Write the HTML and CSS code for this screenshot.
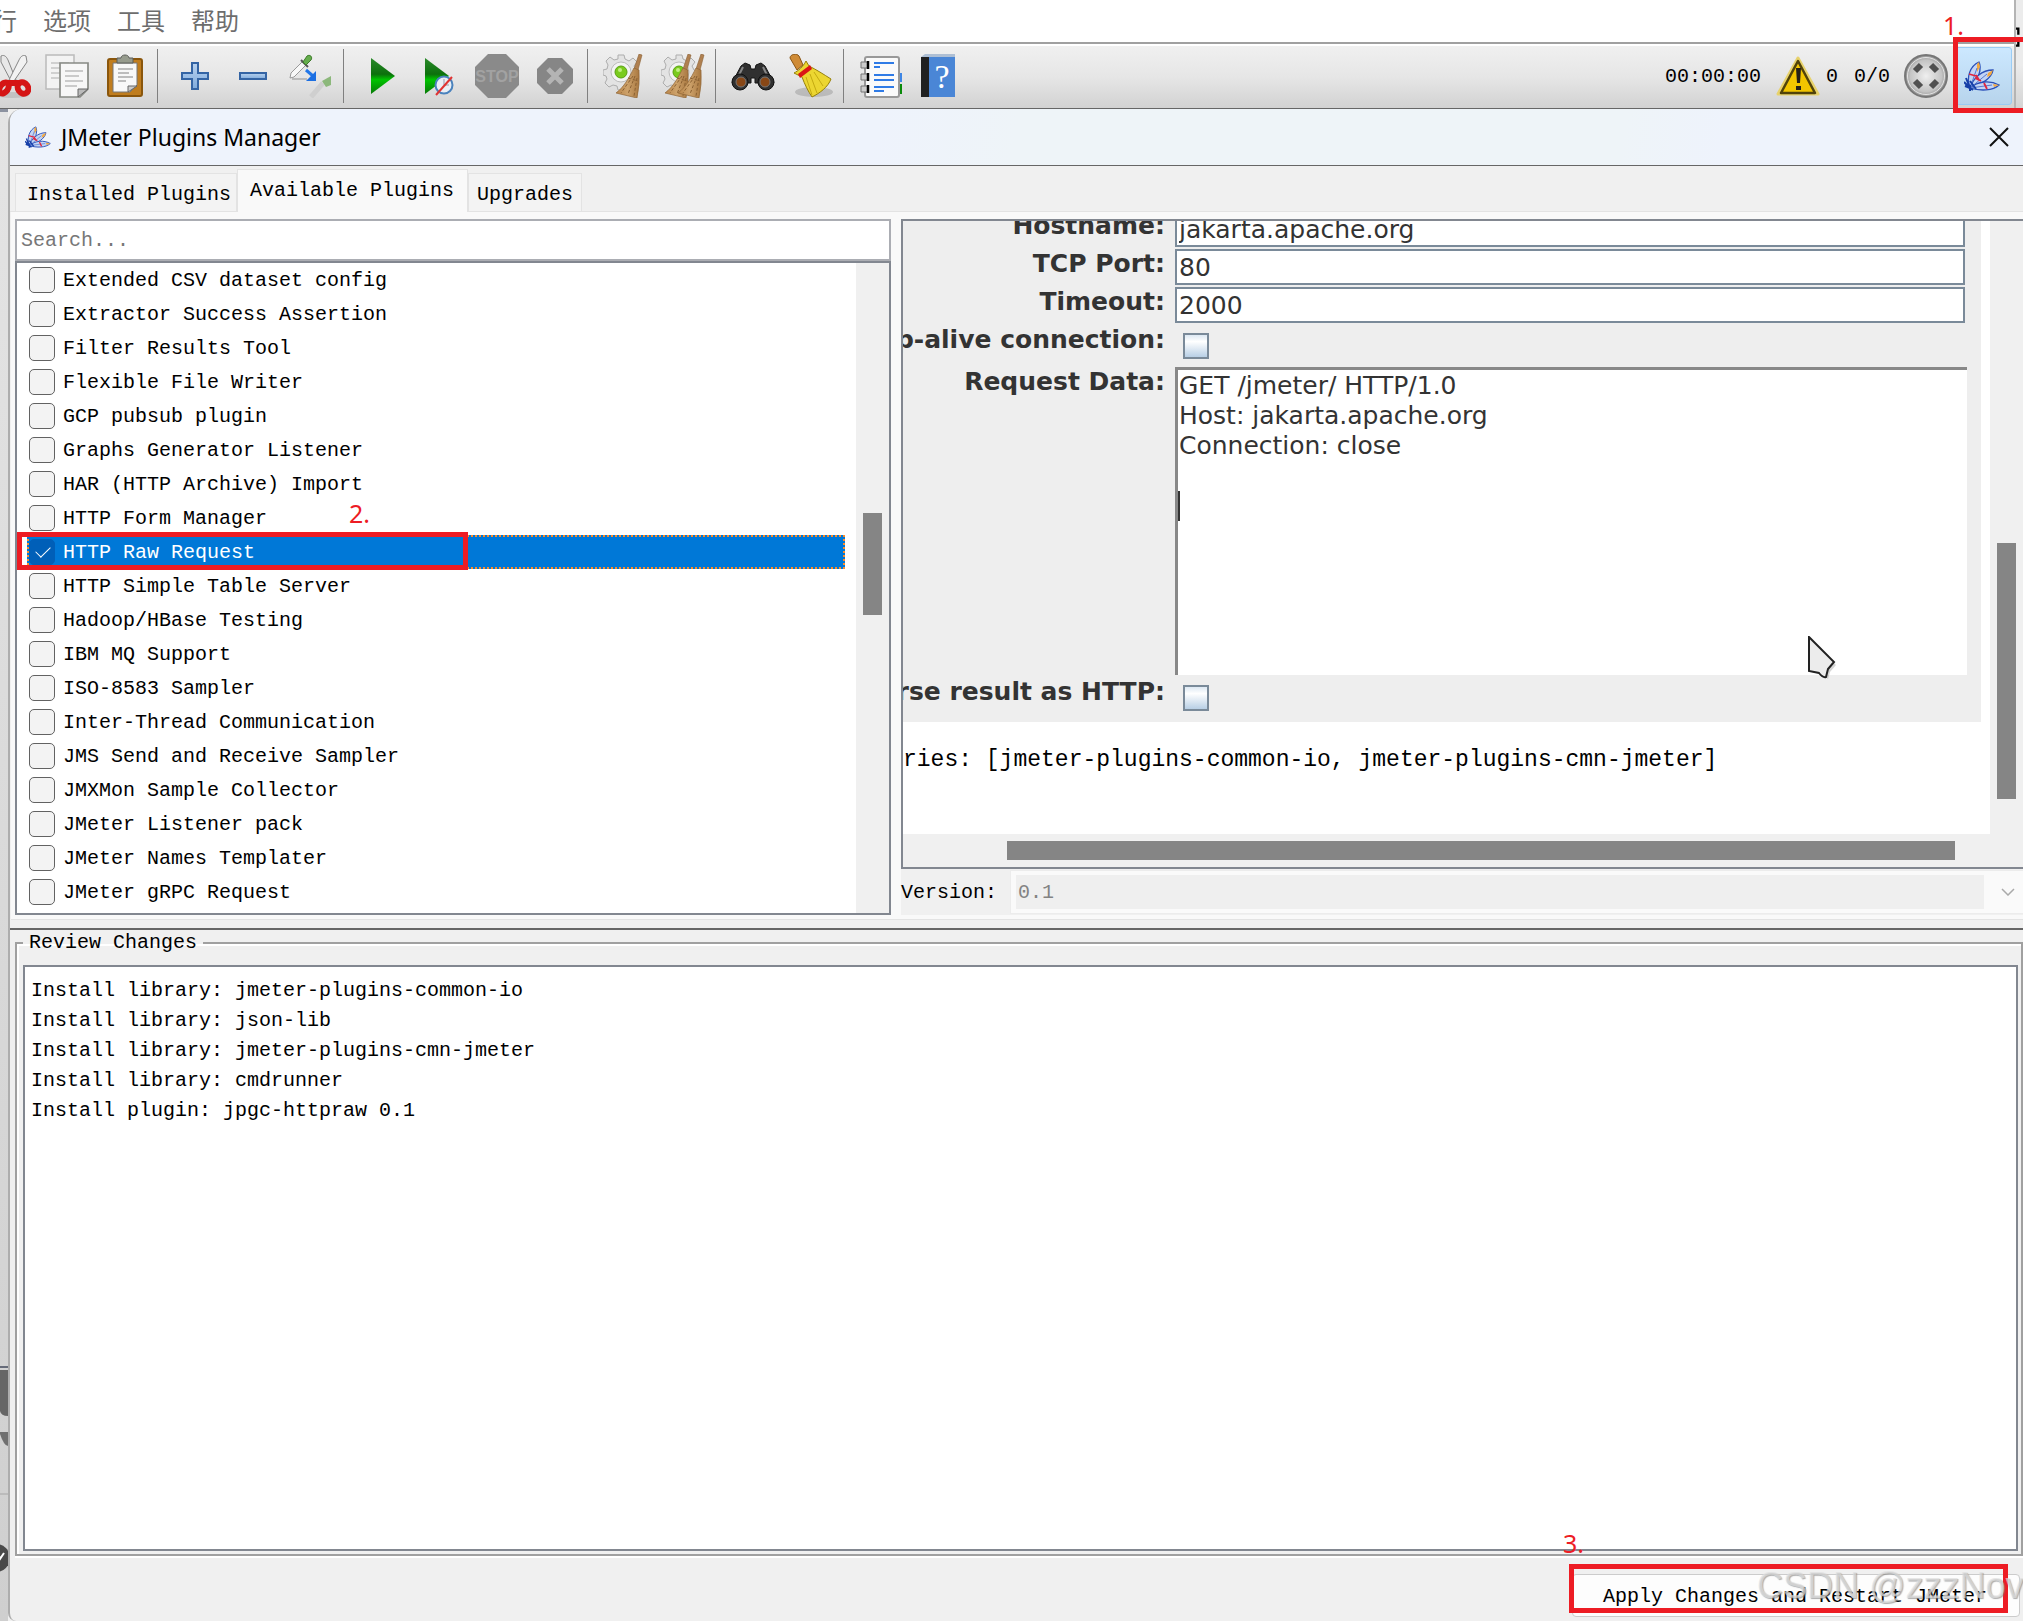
FILE: index.html
```html
<!DOCTYPE html>
<html lang="zh-CN">

<head>
    <meta charset="UTF-8">
    <meta name="viewport" content="width=device-width, initial-scale=1.0">
    <title>JMeter Plugins Manager</title>
    <link rel="stylesheet" href="styles.css">
</head>

<body>
    <svg class="defs" aria-hidden="true">
        <defs>
            <linearGradient id="green" x1="0" y1="0" x2="0" y2="1">
                <stop offset="0" stop-color="#2b8a2b" />
                <stop offset=".45" stop-color="#0c700c" />
                <stop offset=".6" stop-color="#00c400" />
                <stop offset="1" stop-color="#087808" />
            </linearGradient>
            <linearGradient id="blue" x1="0" y1="0" x2="0" y2="1">
                <stop offset="0" stop-color="#b9d2ee" />
                <stop offset="1" stop-color="#7fabdd" />
            </linearGradient>
            <linearGradient id="straw" x1="0" y1="0" x2="1" y2="0">
                <stop offset="0" stop-color="#b98549" />
                <stop offset=".5" stop-color="#cda26b" />
                <stop offset="1" stop-color="#a97840" />
            </linearGradient>
            <radialGradient id="ball">
                <stop offset="0" stop-color="#efefef" />
                <stop offset=".75" stop-color="#c4c4c4" />
                <stop offset="1" stop-color="#8e8e8e" />
            </radialGradient>
        </defs>
        <symbol id="feather" viewBox="0 0 36 32">
            <g fill="#c3d4f4" stroke="#2b50b8" stroke-width="1.3">
                <path d="M6 28C2 17 6 6 15 2c3 6 0 18-9 26z" />
                <path d="M6 28C9 18 18 10 29 10c-1 8-12 15-23 18z" />
                <path d="M6 28c8-7 20-8 29-3-6 6-19 6-29 3z" />
            </g>
            <path d="M13 4l2-2 1 5-3 5zM24 13l5-3-2 5-4 2zM29 24l6 1-5 2z" fill="#f5a83c" />
            <path d="M6 28L13 8M6 28l17-14M6 28l22-3" stroke="#5779cf" fill="none" />
            <path d="M5 14l7 2M11 18l6 3M20 23l3 6M12 15l3 5" stroke="#e0263f" stroke-width="1.8" fill="none" />
            <path d="M0 22l6 6M2 18l4 10M1 26l5 2M9 30l-3-2M6 31v-6M12 29l-6-8" stroke="#163fa8" stroke-width="2" />
        </symbol>
        <symbol id="gear" viewBox="0 0 36 36">
            <path d="M15 1h6l1 4 4 2 4-3 4 4-3 4 2 4 3 1v5l-4 1-2 4 3 4-4 4-4-3-4 1-1 3h-5l-1-4-4-1-4 2-4-4 2-4-1-3-3-1v-5l4-1 1-4-2-4 4-4 4 3 4-1z" fill="#e3e3e3" stroke="#adadad" />
            <circle cx="18" cy="18" r="10" fill="#f3f3f3" stroke="#bdbdbd" />
            <circle cx="18" cy="18" r="6" fill="#7acb1d" stroke="#58a010" />
            <circle cx="17" cy="16" r="2" fill="#c0f080" />
        </symbol>
        <symbol id="besom" viewBox="0 0 28 44">
            <path d="M24 0l3 1-4 15-4-1z" fill="#b08050" stroke="#8b6337" stroke-width=".6" />
            <path d="M19 14l5 2q1 14-2 28l-21-5c8-6 13-15 18-25z" fill="url(#straw)" stroke="#8f6536" stroke-width=".7" />
            <path d="M13 24l10 3M18 22L6 39M20 22l-7 18M22 24l-3 18" stroke="#8a6032" stroke-dasharray="3 2" fill="none" />
        </symbol>
    </svg>

    <div class="app">
        <nav class="menubar">
            <a href="#">行</a>
            <a href="#">选项</a>
            <a href="#">工具</a>
            <a href="#">帮助</a>
        </nav>
        <div class="toolbar">
            <button class="tool" aria-label="Cut">
                <svg viewBox="0 0 44 44">
                    <ellipse cx="25" cy="41" rx="17" ry="3" fill="#aaa" opacity=".5" />
                    <path d="M14 2c4-2 6 2 7 4l8 20-5 1L14 8z" fill="#e8e8e8" stroke="#858585" />
                    <path d="M39 2c-4-2-6 2-7 4l-10 20 5 1L40 8z" fill="#f2f2f2" stroke="#858585" />
                    <g fill="none" stroke="#d51515" stroke-width="6">
                        <ellipse cx="17" cy="34" rx="4" ry="6" transform="rotate(35 17 34)" />
                        <ellipse cx="36" cy="34" rx="5" ry="6" transform="rotate(-35 36 34)" />
                    </g>
                    <path d="M20 26h13l-3 6h-6z" fill="#d51515" />
                </svg>
            </button>
            <button class="tool" aria-label="Copy">
                <svg viewBox="0 0 44 44">
                    <path d="M1 1h28v34H1z" fill="#f3f3f3" stroke="#bbb" stroke-width="1.500" />
                    <path d="M6 9h18M6 14h9M6 19h9M6 24h8" stroke="#d0d0d0" stroke-width="2" />
                    <path d="M15 9h28v26l-8 8H15z" fill="#f7f7f7" stroke="#888a85" stroke-width="1.700" />
                    <path d="M20 17h18M20 22h14M20 27h18M20 32h12" stroke="#bcbcbc" stroke-width="1.700" />
                    <path d="M33 43v-8h10z" fill="#bbb" stroke="#666" />
                </svg>
            </button>
            <button class="tool" aria-label="Paste">
                <svg viewBox="0 0 44 44">
                    <rect x="5" y="5" width="34" height="37" rx="2" fill="#c07d1e" stroke="#8a560c" stroke-width="2" />
                    <path d="M10 9h24v22l-7 7H10z" fill="#f8f8f8" stroke="#777" />
                    <path d="M14 7V4h4c0-4 8-4 8 0h4v5H14z" fill="#969b8d" stroke="#5b5d58" />
                    <path d="M15 15h15M15 19h11M15 23h15M15 27h8" stroke="#a9a9a9" stroke-width="1.600" />
                    <path d="M25 38v-6h9z" fill="#ccc" stroke="#666" />
                </svg>
            </button>
            <span class="sep"></span>
            <button class="tool" aria-label="Expand all">
                <svg viewBox="0 0 44 44">
                    <path d="M19 9h6v10h10v6H25v10h-6V25H9v-6h10z" fill="url(#blue)" stroke="#3464a4" stroke-width="2" />
                </svg>
            </button>
            <button class="tool" aria-label="Collapse all">
                <svg viewBox="0 0 44 44">
                    <path d="M9 19h26v6H9z" fill="url(#blue)" stroke="#3464a4" stroke-width="2" />
                </svg>
            </button>
            <button class="tool" aria-label="Toggle">
                <svg viewBox="0 0 44 44">
                    <path d="M13 8l4 3L5 23l-4 1 1-5z" fill="#f8f8f8" stroke="#999" />
                    <path d="M12 6l7 7" stroke="#555" stroke-width="2" />
                    <path d="M14 8l4-6c3-2 6 1 4 4l-5 5z" fill="#65ad4c" stroke="#3d7b2b" />
                    <path d="M3 25h15" stroke="#bbb" stroke-width="2" />
                    <path d="M17 16l7 6" stroke="#2277e8" stroke-width="3" />
                    <path d="M27 17v10H17z" fill="#1c6fe2" />
                    <path d="M34 29L22 43" stroke="#cfcfcf" stroke-width="5" />
                    <path d="M33 27l9-5v9l-5 2z" fill="#8cb87b" />
                </svg>
            </button>
            <span class="sep"></span>
            <button class="tool" aria-label="Start">
                <svg viewBox="0 0 44 44">
                    <path d="M12 4l24 18-24 18z" fill="url(#green)" />
                </svg>
            </button>
            <button class="tool" aria-label="Start no pauses">
                <svg viewBox="0 0 44 44">
                    <path d="M8 4l24 18L8 40z" fill="url(#green)" />
                    <circle cx="27" cy="31" r="8.500" fill="#e9eef5" stroke="#4a82bd" stroke-width="2" />
                    <path d="M27 25v6h5" stroke="#99a" fill="none" />
                    <path d="M19 41l16-18" stroke="#e03333" stroke-width="2" />
                </svg>
            </button>
            <button class="tool" aria-label="Stop" disabled>
                <svg viewBox="0 0 44 44">
                    <path d="M13 0h18l13 13v18L31 44H13L0 31V13z" fill="#8a8a8a" />
                    <text x="22" y="28" class="stop-text">STOP</text>
                </svg>
            </button>
            <button class="tool" aria-label="Shutdown" disabled>
                <svg viewBox="0 0 44 44">
                    <path d="M15 4h14l11 11v14L29 40H15L4 29V15z" fill="#868686" />
                    <path d="M15 15l14 14M29 15L15 29" stroke="#b4b4b4" stroke-width="5" />
                </svg>
            </button>
            <span class="sep"></span>
            <button class="tool" aria-label="Clear">
                <svg viewBox="0 0 44 44">
                    <use href="#gear" width="36" height="36" />
                    <use href="#besom" x="12" width="28" height="44" />
                </svg>
            </button>
            <button class="tool" aria-label="Clear all">
                <svg viewBox="0 0 44 44">
                    <use href="#gear" width="36" height="36" />
                    <use href="#besom" x="3" width="28" height="44" />
                    <use href="#besom" x="16" width="28" height="44" />
                </svg>
            </button>
            <span class="sep"></span>
            <button class="tool" aria-label="Search">
                <svg viewBox="0 0 44 44">
                    <path d="M14 9l5 2 1 4h4l1-4 5-2 4 3 9 17H24v-5h-4v5H1l9-17z" fill="#303030" stroke="#151515" />
                    <path d="M12 13l-6 12M32 13l6 12" stroke="#888" stroke-width="2" />
                    <circle cx="9" cy="28" r="8" fill="#303030" stroke="#111" />
                    <circle cx="35" cy="28" r="8" fill="#303030" stroke="#111" />
                    <circle cx="10" cy="28" r="5" fill="#884716" stroke="#777" />
                    <circle cx="34" cy="28" r="5" fill="#884716" stroke="#777" />
                </svg>
            </button>
            <button class="tool" aria-label="Reset search">
                <svg viewBox="0 0 44 44">
                    <ellipse cx="25" cy="38" rx="19" ry="5" fill="#999" opacity=".5" />
                    <path d="M1 4c0-4 7-5 9-2l4 9-6 5z" fill="#cf8b36" stroke="#8b5513" />
                    <path d="M17 7l3 5c8 4 14 8 22 13-3 8-11 14-19 18-4-6-7-12-10-20l-8-4c4-2 9-6 12-12z" fill="#ecd631" stroke="#96800a" />
                    <path d="M25 18l9 14M21 20l7 19M17 23l6 18" stroke="#c5ab11" fill="none" />
                    <path d="M9 20l12-9 2 4-12 9z" fill="#da1616" />
                </svg>
            </button>
            <span class="sep"></span>
            <button class="tool" aria-label="Function helper">
                <svg viewBox="0 0 44 44">
                    <path d="M38 19h5v9h-5z" fill="#3e86e5" />
                    <path d="M38 30h5v10h-5z" fill="#0a8a0a" />
                    <rect x="6" y="3" width="34" height="40" rx="2" fill="#fafafa" stroke="#999" stroke-width="2" />
                    <path d="M15 9h20M15 21h20M15 26h20M15 33h20" stroke="#2f7be6" stroke-width="2" />
                    <path d="M15 13h6M15 37h10" stroke="#2f7be6" stroke-width="2" />
                    <g fill="#ccc" stroke="#777">
                        <path d="M2 8h7v6H2zM2 20h7v6H2zM2 32h7v6H2z" />
                    </g>
                    <path d="M9 7v8M9 19v8M9 31v8" stroke="#000" stroke-width="2.500" />
                </svg>
            </button>
            <button class="tool" aria-label="Help">
                <svg viewBox="0 0 44 44">
                    <path d="M4 3l4-3h30v5H4z" fill="#aebfd4" />
                    <rect x="4" y="3" width="34" height="40" fill="#4a86d6" />
                    <path d="M4 3h8v40H4z" fill="#202020" />
                    <text x="25" y="34" class="help-text">?</text>
                </svg>
            </button>
            <div class="status">
                <span class="clock">00:00:00</span>
                <svg class="warn" viewBox="0 0 44 44">
                    <path d="M22 4l20 36H2z" fill="#f5cb0b" stroke="#e7d26c" stroke-width="3" stroke-linejoin="round" />
                    <path d="M22 7l17 32H5z" fill="#f2c500" stroke="#51430a" stroke-width="2.500" stroke-linejoin="round" />
                    <path d="M20 14h5l-1 15h-3zM20 32h5v4h-5z" fill="#252018" />
                </svg>
                <span class="errors">0</span>
                <span class="threads">0/0</span>
                <svg class="ball" viewBox="0 0 44 44">
                    <circle cx="22" cy="22" r="21" fill="url(#ball)" stroke="#777" stroke-width="2" />
                    <circle cx="22" cy="22" r="18.500" fill="none" stroke="#e4e4e4" />
                    <path d="M11 17l6-6M27 11l6 6M33 27l-6 6M17 33l-6-6" stroke="#505050" stroke-width="6" />
                </svg>
                <button class="plugins-btn" aria-label="Plugins Manager">
                    <svg viewBox="0 0 36 32"><use href="#feather" /></svg>
                    <span class="mark mark-1"></span>
                    <span class="step step-1">1.</span>
                </button>
            </div>
        </div>
        <div class="desktop-edge">
            <svg viewBox="0 0 9 28"><path d="M0 2h3v8M0 24h3v-9H0" fill="none" stroke="#000" stroke-width="3" /></svg>
        </div>
    </div>

    <div class="work">
        <aside class="behind">
            <svg viewBox="0 0 8 340">
                <path d="M0 86h8" stroke="#666b79" stroke-width="2" />
                <path d="M0 89h8v46Q1 135 0 130z" fill="#666" />
                <path d="M0 151h8v14Q4 165 0 153z" fill="#707070" />
                <path d="M0 213h8" stroke="#bbb" stroke-width="2" />
                <circle cx="-4" cy="277" r="14" fill="#4a4a4a" />
                <path d="M-1 275l1 3 4-6" stroke="#fff" stroke-width="2" fill="none" />
            </svg>
        </aside>

        <main class="dialog">
            <header class="titlebar">
                <svg class="logo" viewBox="0 0 36 32"><use href="#feather" /></svg>
                <h1>JMeter Plugins Manager</h1>
                <button class="close" aria-label="Close">
                    <svg viewBox="0 0 20 20"><path d="M1 1l18 18M19 1L1 19" stroke="#111" stroke-width="2" /></svg>
                </button>
            </header>

            <div class="tabs" role="tablist">
                <button class="tab" role="tab">Installed Plugins</button>
                <button class="tab active" role="tab" aria-selected="true">Available Plugins</button>
                <button class="tab" role="tab">Upgrades</button>
            </div>

            <section class="panel">
                <div class="left">
                    <input class="search" type="text" placeholder="Search..." aria-label="Search">
                    <div class="list">
                        <div class="rows">
                            <label class="row"><input type="checkbox">Extended CSV dataset config</label>
                            <label class="row"><input type="checkbox">Extractor Success Assertion</label>
                            <label class="row"><input type="checkbox">Filter Results Tool</label>
                            <label class="row"><input type="checkbox">Flexible File Writer</label>
                            <label class="row"><input type="checkbox">GCP pubsub plugin</label>
                            <label class="row"><input type="checkbox">Graphs Generator Listener</label>
                            <label class="row"><input type="checkbox">HAR (HTTP Archive) Import</label>
                            <label class="row"><input type="checkbox">HTTP Form Manager</label>
                            <label class="row selected">
                                <input type="checkbox" checked>HTTP Raw Request
                                <span class="mark mark-2"></span>
                                <span class="step step-2">2.</span>
                            </label>
                            <label class="row"><input type="checkbox">HTTP Simple Table Server</label>
                            <label class="row"><input type="checkbox">Hadoop/HBase Testing</label>
                            <label class="row"><input type="checkbox">IBM MQ Support</label>
                            <label class="row"><input type="checkbox">ISO-8583 Sampler</label>
                            <label class="row"><input type="checkbox">Inter-Thread Communication</label>
                            <label class="row"><input type="checkbox">JMS Send and Receive Sampler</label>
                            <label class="row"><input type="checkbox">JMXMon Sample Collector</label>
                            <label class="row"><input type="checkbox">JMeter Listener pack</label>
                            <label class="row"><input type="checkbox">JMeter Names Templater</label>
                            <label class="row"><input type="checkbox">JMeter gRPC Request</label>
                        </div>
                        <div class="vtrack"><div class="thumb"></div></div>
                    </div>
                </div>

                <div class="right">
                    <div class="details">
                        <div class="view">
                            <div class="sampler">
                                <label for="host">Hostname:</label>
                                <input class="field" id="host" type="text" value="jakarta.apache.org">
                                <label for="port">TCP Port:</label>
                                <input class="field" id="port" type="text" value="80">
                                <label for="timeout">Timeout:</label>
                                <input class="field" id="timeout" type="text" value="2000">
                                <label for="alive">p-alive connection:</label>
                                <input class="metal" id="alive" type="checkbox">
                                <label for="data">Request Data:</label>
                                <div class="data">
                                    <textarea id="data" spellcheck="false">GET /jmeter/ HTTP/1.0
Host: jakarta.apache.org
Connection: close
</textarea>
                                    <span class="caret"></span>
                                    <svg class="pointer" viewBox="0 0 30 46">
                                        <path d="M3 4l25 25-6 7-2 7-6-5-11-2z" fill="#999" opacity=".4" />
                                        <path d="M1 1l25 25-6 7-2 8q-3 1-7-4l-10-2z" fill="#ececec" stroke="#222" stroke-width="2" />
                                    </svg>
                                </div>
                                <label for="parse">rse result as HTTP:</label>
                                <input class="metal" id="parse" type="checkbox">
                            </div>
                            <p class="libs">ries: [jmeter-plugins-common-io, jmeter-plugins-cmn-jmeter]</p>
                        </div>
                        <div class="vtrack"><div class="thumb"></div></div>
                        <div class="htrack"><div class="thumb"></div></div>
                    </div>
                    <div class="version">
                        <label for="version">Version:</label>
                        <div class="combo">
                            <select id="version" disabled>
                                <option>0.1</option>
                            </select>
                            <svg viewBox="0 0 14 8"><path d="M1 1l6 6 6-6" fill="none" stroke="#aaa" stroke-width="1.500" /></svg>
                        </div>
                    </div>
                </div>
            </section>

            <div class="divider"></div>

            <fieldset class="review">
                <legend>Review Changes</legend>
                <pre class="log">Install library: jmeter-plugins-common-io
Install library: json-lib
Install library: jmeter-plugins-cmn-jmeter
Install library: cmdrunner
Install plugin: jpgc-httpraw 0.1</pre>
            </fieldset>

            <footer class="actions">
                <button class="apply">
                    Apply Changes and Restart JMeter
                    <span class="mark mark-3"></span>
                    <span class="step step-3">3.</span>
                    <span class="watermark">CSDN @zzzNov</span>
                </button>
            </footer>
        </main>
    </div>
</body>

</html>
```
FILE: styles.css
```css
* {
    box-sizing: border-box;
}

body {
    margin: 0;
    min-height: 100vh;
    display: flex;
    flex-direction: column;
    overflow: hidden;
    background: #f0f0f0;
    color: #000;
    font-family: "Liberation Mono", "Noto Sans CJK SC", monospace;
    font-size: 20px;
}

button,
input,
select,
textarea {
    font: inherit;
    color: inherit;
    margin: 0;
    padding: 0;
    border: 0;
    border-radius: 0;
    background: none;
}

svg {
    display: block;
    flex: none;
}

.defs {
    position: absolute;
    width: 0;
    height: 0;
}

/* main window: menu and toolbar */
.app {
    display: grid;
    grid-template-columns: 1fr 9px;
    grid-template-rows: 44px 64px;
    border-bottom: 1px solid #666;
}

.menubar {
    display: flex;
    align-items: center;
    gap: 26px;
    margin-left: -7px;
    padding-bottom: 2px;
    background: #fff;
    border-bottom: 2px solid #a0a0a0;
    font-family: "Noto Sans CJK SC", sans-serif;
    font-size: 24px;
    line-height: 34px;
}

.menubar a {
    color: #6d6d6d;
    text-decoration: none;
}

.toolbar {
    grid-row: 2;
    display: flex;
    align-items: center;
    padding-bottom: 2px;
    border-top: 2px solid #fff;
    background: linear-gradient(#f0f0f0, #e6e6e6 50%, #d2d2d2);
}

.tool {
    flex: none;
    width: 58px;
    height: 58px;
    padding: 7px;
}

.tool:first-child {
    margin-left: -20px;
}

.tool svg {
    width: 44px;
    height: 44px;
}

.stop-text {
    font: bold 16px "Liberation Sans", sans-serif;
    fill: #a2a2a2;
    text-anchor: middle;
}

.help-text {
    font: 34px "Liberation Serif", serif;
    fill: #fff;
    text-anchor: middle;
}

.sep {
    flex: none;
    width: 12px;
    height: 54px;
    background: linear-gradient(#808080, #808080) 3px 0 / 1px 100% no-repeat;
}

.status {
    display: flex;
    align-items: center;
    margin-left: auto;
    padding-right: 2px;
}

.warn,
.ball {
    width: 44px;
    height: 44px;
}

.warn {
    margin: 0 6px 0 15px;
}

.threads {
    margin: 0 14px 0 16px;
}

.plugins-btn {
    position: relative;
    width: 58px;
    height: 58px;
    margin-left: 6px;
    padding: 11px 9px;
    border: 1px solid #99ccf5;
    border-radius: 3px;
    background: linear-gradient(#cce8ff, #b7d4ec);
}

.plugins-btn svg {
    width: 36px;
    height: 32px;
}

.desktop-edge {
    grid-column: 2;
    grid-row: 1 / 3;
    padding-top: 27px;
    border-left: 2px solid #b4b4b4;
    background: linear-gradient(#ececec 60%, #d4d4d4);
}

/* red callouts */
.mark {
    position: absolute;
    border: 5px solid #ed1c24;
}

.step {
    position: absolute;
    color: #ed1c24;
    font-family: "Noto Sans", sans-serif;
    font-size: 25px;
    line-height: 26px;
}

.mark-1 {
    left: -2px;
    top: -11px;
    width: 78px;
    height: 76px;
}

.step-1 {
    left: -12px;
    top: -36px;
}

.mark-2 {
    left: -12px;
    top: -5px;
    width: 451px;
    height: 38px;
}

.step-2 {
    left: 320px;
    top: -37px;
}

.mark-3 {
    left: -4px;
    top: -11px;
    width: 439px;
    height: 49px;
}

.step-3 {
    left: -10px;
    top: -45px;
}

/* plugins dialog */
.work {
    flex: 1;
    display: flex;
}

.behind {
    width: 8px;
    display: flex;
    flex-direction: column;
    justify-content: flex-end;
    border-top: 3px solid #8c92a0;
    background: linear-gradient(#e4e4e4, #cfcfcf);
}

.behind svg {
    width: 8px;
    height: 340px;
    overflow: hidden;
}

.dialog {
    flex: 1;
    min-width: 0;
    display: flex;
    flex-direction: column;
    border-left: 2px solid #adadad;
    border-radius: 14px 0 0 8px;
    background: #f0f0f0;
}

.titlebar {
    display: flex;
    align-items: center;
    height: 57px;
    padding: 0 14px 0 15px;
    border-bottom: 1px solid #666;
    border-radius: 12px 0 0 0;
    background: linear-gradient(100deg, #eef3fc 43%, #eef4f8 50%, #eef4f8 80%, #eef3fc 85%);
}

.logo {
    width: 26px;
    height: 24px;
}

.titlebar h1 {
    margin: 0 0 0 10px;
    font-family: "Noto Sans", sans-serif;
    font-size: 23px;
    font-weight: 400;
}

.close {
    margin-left: auto;
}

.close svg {
    width: 20px;
    height: 20px;
}

.tabs {
    display: flex;
    align-items: flex-end;
    height: 46px;
    padding-left: 5px;
    border-bottom: 1px solid #e3e3e3;
}

.tab {
    height: 38px;
    padding: 4px 5px 0 11px;
    border: 1px solid #e3e3e3;
    border-bottom: 0;
    background: #f3f3f3;
    line-height: 30px;
}

.tab.active {
    height: 43px;
    margin-bottom: -1px;
    padding: 0 13px 0 12px;
    background: #f9f9f9;
}

.tab:last-child {
    padding: 4px 8px 0;
}

.panel {
    display: grid;
    grid-template-columns: minmax(0, 876fr) minmax(0, 1122fr);
    gap: 10px;
    margin-left: 1px;
    padding: 7px 0 4px 4px;
    border-bottom: 1px solid #e3e3e3;
    background: #f9f9f9;
}

.left,
.right {
    display: flex;
    flex-direction: column;
    min-width: 0;
}

.search {
    height: 42px;
    padding-left: 4px;
    border: 2px solid #abadb3;
    background: #fff;
}

.search::placeholder {
    color: #777;
    opacity: 1;
}

.list {
    display: flex;
    border: 2px solid #828790;
    background: #fff;
}

.rows {
    flex: 1;
    padding: 0 11px 4px 10px;
}

.row {
    display: flex;
    align-items: center;
    gap: 8px;
    height: 34px;
    padding-left: 2px;
}

.row input {
    appearance: none;
    width: 26px;
    height: 26px;
    border: 1px solid #626262;
    border-radius: 5px;
    background: #f3f3f3;
}

.row.selected {
    position: relative;
    padding-left: 0;
    border: 2px dotted #ff8c28;
    background: #0078d7;
    color: #fff;
}

.row.selected input {
    border-color: #005fb8;
    background: #005fb8;
}

.row.selected input::after {
    content: "";
    display: block;
    width: 13px;
    height: 7px;
    margin: 6px;
    border: solid #fff;
    border-width: 0 0 1px 1px;
    transform: rotate(-45deg);
}

.vtrack {
    width: 33px;
    background: #f0f0f0;
}

.thumb {
    background: #858585;
}

.vtrack .thumb {
    width: 19px;
    height: 102px;
    margin: 250px 0 0 7px;
}

.details {
    flex: 1;
    display: grid;
    grid-template-columns: minmax(0, 1fr) 33px;
    grid-template-rows: 613px 33px;
    border: 2px solid #828790;
    border-right: 0;
    background: #f0f0f0;
}

/* the view is scrolled to its end, so the content hangs from the bottom */
.view {
    display: flex;
    flex-direction: column;
    justify-content: flex-end;
    overflow: hidden;
    background: #fff;
}

.sampler {
    display: grid;
    grid-template-columns: 262px 1fr;
    gap: 2px 10px;
    margin-right: 9px;
    padding: 0 16px 5px 0;
    background: #eee;
    color: #333;
    font-family: "DejaVu Sans", sans-serif;
    font-size: 25px;
    line-height: 30px;
}

.sampler label {
    display: flex;
    justify-content: flex-end;
    font-weight: 700;
    white-space: nowrap;
}

.field {
    width: 100%;
    height: 36px;
    padding-left: 2px;
    border: 2px solid #7a8a99;
    background: #fff;
}

.metal {
    appearance: none;
    width: 26px;
    height: 26px;
    margin: 8px 8px 6px;
    border: 2px solid #7a8a99;
    background: linear-gradient(#dde8f3, #fff 30%, #b8cfe5);
}

.data {
    position: relative;
    margin-right: -2px;
}

.data textarea {
    display: block;
    width: 100%;
    height: 308px;
    padding: 1px;
    border: solid #888;
    border-width: 3px 0 0 3px;
    background: #fff;
    resize: none;
    outline: 0;
}

.caret {
    position: absolute;
    left: 3px;
    top: 124px;
    width: 2px;
    height: 30px;
    background: #333;
}

.pointer {
    position: absolute;
    right: 129px;
    bottom: -7px;
    width: 30px;
    height: 46px;
}

.libs {
    margin: 0;
    padding: 21px 0 57px;
    font-size: 23px;
    line-height: 34px;
    white-space: nowrap;
}

.details .vtrack .thumb {
    height: 256px;
    margin-top: 322px;
}

.htrack {
    grid-column: 1 / 3;
    padding: 7px 68px 7px 104px;
}

.htrack .thumb {
    height: 19px;
}

.version {
    display: flex;
    align-items: center;
    height: 46px;
    background: #f0f0f0;
}

.combo {
    flex: 1;
    display: flex;
    align-items: center;
    gap: 17px;
    height: 44px;
    margin-left: 13px;
    padding: 5px 8px 5px 5px;
    border: 1px solid #ececec;
    border-right: 0;
    background: #fafafa;
}

.combo select {
    appearance: none;
    flex: 1;
    height: 34px;
    padding-left: 2px;
    background: #efefef;
    color: #838383;
    opacity: 1;
}

.combo svg {
    width: 14px;
    height: 8px;
}

.divider {
    height: 2px;
    margin-top: 8px;
    background: #666;
}

.review {
    flex: 1;
    display: flex;
    min-width: 0;
    margin: 1px 0 0 5px;
    padding: 10px 3px 3px 6px;
    border: 2px solid #a0a0a0;
    box-shadow: inset 2px 2px #fff, 0 2px #fff;
}

.review legend {
    padding: 0 6px;
    line-height: 24px;
}

.log {
    flex: 1;
    min-width: 0;
    margin: 0;
    padding: 9px 6px;
    border: 2px solid #828790;
    background: #fff;
    font: inherit;
    line-height: 30px;
}

/* action bar */
.actions {
    display: flex;
    justify-content: flex-end;
    padding: 18px 3px 4px;
}

.apply {
    position: relative;
    width: 448px;
    height: 43px;
    padding: 2px 33px 0 30px;
    border: 1px solid #ccc;
    border-radius: 4px;
    background: #fdfdfd;
    text-align: left;
    white-space: nowrap;
}

.watermark {
    position: absolute;
    left: 184px;
    top: -9px;
    font-family: "Liberation Sans", sans-serif;
    font-size: 36px;
    line-height: 40px;
    color: rgba(225, 225, 225, .7);
    text-shadow: 1px 1px 1px rgba(120, 120, 120, .6);
}
```
